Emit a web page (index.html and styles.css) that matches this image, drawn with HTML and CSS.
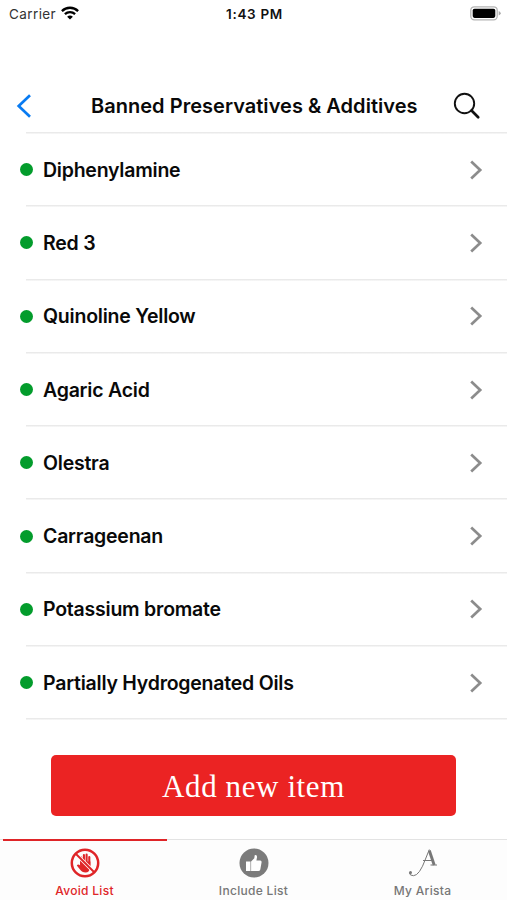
FILE: index.html
```html
<!DOCTYPE html>
<html lang="en">
<head>
<meta charset="utf-8">
<title>Banned Preservatives &amp; Additives</title>
<link rel="stylesheet" href="styles.css">
</head>
<body>
<div class="screen">
  <header class="status">
    <div class="carrier"><span>Carrier</span>
      <svg width="18" height="14" viewBox="0 0 18 14" fill="none" stroke="#000" stroke-width="2.3"><path d="M.9 5.1C5.4.6 12.6.6 17.1 5.1M3.9 8.2C6.8 5.4 11.2 5.4 14.1 8.2"/><path d="M9 13.6L6.1 10.7Q9 8.4 11.9 10.7Z" fill="#000" stroke="none"/></svg>
    </div>
    <div class="time"><span>1:43 PM</span></div>
    <svg class="battery" width="31" height="15" viewBox="0 0 31 15"><rect x=".8" y=".8" width="26.4" height="13" rx="3.5" fill="#fff" stroke="#b4b4b4" stroke-width="1.3"/><rect x="2.7" y="2.7" width="22.6" height="9.2" rx="1.8"/><path d="M28.7 5Q30.7 5.8 30.7 7.3T28.7 9.6Z" fill="#aaa"/></svg>
  </header>
  <nav class="navbar">
    <svg class="back" width="16" height="26" viewBox="0 0 16 26" fill="none" stroke="#087bf2" stroke-width="2.7"><path d="M14 2.2L2.7 13L14 23.8"/></svg>
    <h1><span>Banned Preservatives &amp; Additives</span></h1>
    <svg class="search" width="28" height="28" viewBox="0 0 28 28" fill="none" stroke="#111"><circle cx="11.5" cy="11.5" r="9.7" stroke-width="1.9"/><path d="M18.5 18.5L25.2 25.2" stroke-width="2.7" stroke-linecap="round"/></svg>
  </nav>
  <svg class="defs" width="0" height="0"><symbol id="chevron" viewBox="0 0 14 22"><path d="M2.2 2.5L11.2 11L2.2 19.5" fill="none" stroke="#8c8c8c" stroke-width="2.7"/></symbol></svg>
  <ul class="list">
    <li><i class="dot"></i><span>Diphenylamine</span><svg class="chevron"><use href="#chevron"/></svg></li>
    <li><i class="dot"></i><span>Red 3</span><svg class="chevron"><use href="#chevron"/></svg></li>
    <li><i class="dot"></i><span>Quinoline Yellow</span><svg class="chevron"><use href="#chevron"/></svg></li>
    <li><i class="dot"></i><span>Agaric Acid</span><svg class="chevron"><use href="#chevron"/></svg></li>
    <li><i class="dot"></i><span>Olestra</span><svg class="chevron"><use href="#chevron"/></svg></li>
    <li><i class="dot"></i><span>Carrageenan</span><svg class="chevron"><use href="#chevron"/></svg></li>
    <li><i class="dot"></i><span>Potassium bromate</span><svg class="chevron"><use href="#chevron"/></svg></li>
    <li><i class="dot"></i><span>Partially Hydrogenated Oils</span><svg class="chevron"><use href="#chevron"/></svg></li>
  </ul>
  <button class="add"><span>Add new item</span></button>
  <footer class="tabs">
    <div class="tab active">
      <svg width="30" height="30" viewBox="0 0 30 30" fill="none" stroke="#df2528"><path d="M11.2 17V9.5M13.9 15V7M16.6 15V6.5M19.3 17V9" stroke-width="2.1" stroke-linecap="round"/><path d="M10.2 13.5H20.4V19Q19.5 24.5 15.5 24.5Q12 24.5 10 21.5L6.8 17.5Q8 15.7 10.2 17.5Z" fill="#df2528" stroke="none"/><path d="M6 6L24 24" stroke="#fff" stroke-width="3.6"/><path d="M6 6L24 24" stroke-width="2"/><circle cx="15" cy="15" r="13.2" stroke-width="2.5"/></svg>
      <span>Avoid List</span>
    </div>
    <div class="tab">
      <svg width="30" height="30" viewBox="0 0 30 30"><circle cx="15" cy="15" r="14.5" fill="#7b7b7b"/><path d="M7 13.5H11.5V23H7ZM12.1 13.6L15.3 10.3L15.7 7.2Q17.9 6.3 18.1 9L17.4 12.5H21.3Q23 12.9 22.5 14.7L21.3 21.5Q20.9 23 19.3 23H12.1Z" fill="#fff"/></svg>
      <span>Include List</span>
    </div>
    <div class="tab">
      <svg width="30" height="30" viewBox="0 0 30 30" fill="none" stroke="#777"><path d="M21.3 1.5L17.5 11Q11.5 27.5 5.5 27.7Q1.5 27.7 1.5 24.8M15 12.5H24M22.5 17H29" stroke-width="1"/><path d="M21.3 2.5L26.2 17" stroke-width="2.9"/><circle cx="2.5" cy="24.5" r="1.5" fill="#777" stroke="none"/></svg>
      <span>My Arista</span>
    </div>
  </footer>
</div>
</body>
</html>
```
FILE: styles.css
```css
* { box-sizing: border-box; }
body { margin: 0; background: #fff; color: #090909; font-family: Inter, "Liberation Sans", sans-serif; }
.screen { width: 507px; height: 900px; display: flex; flex-direction: column; overflow: hidden; }
span { white-space: nowrap; }
svg { display: block; flex-shrink: 0; }
.defs { position: absolute; }
.status { height: 28px; display: grid; grid-template-columns: 1fr auto 1fr; padding: 0 6px 0 9px; align-items: center; font-size: 13.5px; }
.carrier { display: flex; align-items: center; gap: 5px; color: #333; letter-spacing: .4px; }
.carrier svg { margin-top: -2px; }
.time { font-weight: 600; color: #111; letter-spacing: .7px; margin-right: 1px; }
.battery { justify-self: end; margin-top: -1px; }
.navbar { height: 105px; display: flex; align-items: flex-start; padding: 65px 26px 0 16px; }
.back { margin-right: 59px; }
.search { margin-top: -1px; }
h1 { margin: 0; flex: 1; font-size: 20px; line-height: 26px; font-weight: 600; letter-spacing: .03px; }
.list { list-style: none; margin: -1px 0 0; padding: 0; }
.list li { height: 73.3px; padding: 2px 24px 0 20px; display: flex; align-items: center; background: linear-gradient(#eaeaea, #eaeaea) 26px 0 / 100% 1.5px no-repeat; font-size: 19.5px; font-weight: 600; letter-spacing: -.23px; }
.list li:last-child { height: 74.5px; padding-top: 1px; background: linear-gradient(#eaeaea, #eaeaea) 26px 0 / 100% 1.5px no-repeat, linear-gradient(#eaeaea, #eaeaea) 26px 100% / 100% 1.5px no-repeat; }
.dot { width: 13px; height: 13px; border-radius: 50%; background: #039c2c; margin-right: 10px; }
.chevron { width: 14px; height: 22px; margin-left: auto; }
.add { width: 405px; height: 61px; margin: 35px 0 0 51px; padding: 3px 0 0; border: 0; border-radius: 5px; background: #eb2323; color: #fff; font-family: "Liberation Serif", serif; font-size: 31px; letter-spacing: .6px; flex-shrink: 0; }
.tabs { height: 61px; margin-top: auto; display: grid; grid-template-columns: repeat(3, 1fr); border-top: 1px solid #e3e3e3; background: #fdfdfd; color: #777; font-size: 12px; font-weight: 500; letter-spacing: .3px; }
.tab { display: flex; flex-direction: column; align-items: center; padding-top: 8px; line-height: 16px; gap: 5px; }
.active { color: #df2528; background: linear-gradient(#df2528, #df2528) 3px 0 / 164px 2px no-repeat; margin-top: -1px; padding-top: 9px; }
```
